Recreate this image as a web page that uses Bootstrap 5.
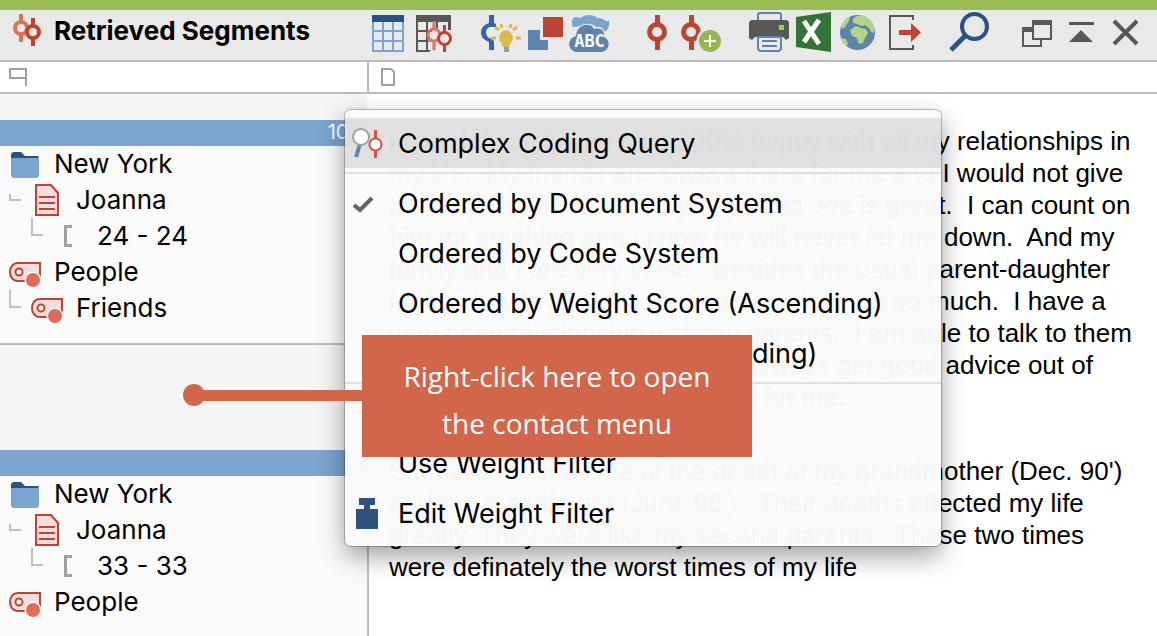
<!DOCTYPE html>
<html lang="en">
<head>
<meta charset="utf-8">
<meta name="viewport" content="width=device-width, initial-scale=1">
<title>Retrieved Segments</title>
<link href="https://cdn.jsdelivr.net/npm/bootstrap@5.3.0/dist/css/bootstrap.min.css" rel="stylesheet">
<style>
  :root { --line: #bcbcbc; --side: 369px; }
  body { font-family: Inter, "Noto Sans", sans-serif; font-size: 26px; line-height: 36px; color: #000; background: #fff; }
  .stripe { height: 10px; background: #99bd52; }
  .toolbar { height: 52px; background: #e9e9e9; border-bottom: 2px solid var(--line); }
  .toolbar h1 { font-size: 26px; line-height: 34px; font-weight: 700; }
  .toolbar svg, .tree svg, .menu svg { display: block; flex: none; }
  .tool { padding: 0; border: 0; background: none; }
  .colheads { height: 32px; border-bottom: 2px solid var(--line); }
  .side { width: var(--side); flex: none; }
  .colheads .side, .segment + .segment { border-right: 2px solid var(--line); }
  .results { min-height: calc(100vh - 94px); }
  .segment { background: #fafafa; }
  .segment:first-child { height: 251px; margin-right: 2px; border-bottom: 2px solid var(--line); }
  .gutter { height: 26px; background: #f5f5f5; }
  .segment + .segment .gutter { height: 105px; }
  .weight { height: 26px; line-height: 24px; font-size: 20px; background: #7ba4cf; color: #fff; padding-right: 6px; }
  .tree li { height: 36px; }
  .quotes { font: 26px/32px "Liberation Sans", Arial, sans-serif; padding: 31px 0 0 20px; }
  .quotes p { white-space: pre; margin-bottom: 42px; }
  .menu { position: absolute; left: 345px; top: 110px; width: 596px; padding: 8px 0; font-size: 27px; background: rgba(250,250,250,.98); border-radius: 6px; box-shadow: 0 0 1px 1px rgba(0,0,0,.25), 0 10px 26px rgba(0,0,0,.38); z-index: 2; }
  .menu .dropdown-item { height: 50px; padding: 2px 0 0 7px; color: #000; }
  .menu .dropdown-item.current { background: rgba(0,0,0,.1); }
  .menu .glyph { width: 46px; flex: none; }
  .menu hr { margin: 4px 0; border-top: 2px solid #e0e0e0; opacity: 1; }
  .callout-box { position: absolute; left: 362px; top: 335px; width: 390px; padding: 18px 0 10px; background: #d2664a; color: #fff; font: 28px/47px "Open Sans", sans-serif; z-index: 3; }
  .callout-box::before { content: ""; position: absolute; right: 100%; top: 55px; width: 168px; height: 11px; background: inherit; }
  .callout-box::after { content: ""; position: absolute; right: 100%; top: 49px; width: 22px; height: 22px; margin-right: 157px; border-radius: 50%; background: inherit; }
</style>
</head>
<body>
<svg width="0" height="0" class="position-absolute" aria-hidden="true">
  <symbol id="folder" viewBox="0 0 28 26"><path d="M0 6V2l2-2h8l4 4h13l1 2z" fill="#2b5381"/><path d="M0 6h28v18l-2 2H2l-2-2z" fill="#7ba4cf"/></symbol>
  <symbol id="doc" viewBox="0 0 24 32"><path d="M1 1h15l7 8v22H1z" fill="#f3dedd" stroke="#bd4332" stroke-width="2"/><path d="M4 13h16M4 19h16M4 25h16" stroke="#bd4332" stroke-width="2"/></symbol>
  <symbol id="code" viewBox="0 0 33 26"><path d="M31 1H9C4 1 1 5 1 10s3 9 8 9h22z" fill="#f3dedd" stroke="#bd4332" stroke-width="2"/><circle cx="10" cy="10" r="3.5" fill="#fff" stroke="#bd4332" stroke-width="2"/><circle cx="24" cy="18" r="8.5" fill="#fafafa"/><circle cx="24" cy="18" r="7" fill="#dd6d58"/></symbol>
  <symbol id="elbow" viewBox="0 0 12 18"><path d="M1 0v17h11" fill="none" stroke="#c3bfbb" stroke-width="2"/></symbol>
  <symbol id="elbow-short" viewBox="0 0 12 7"><path d="M1 0v6h11" fill="none" stroke="#c3bfbb" stroke-width="2"/></symbol>
  <symbol id="bracket" viewBox="0 0 8 22"><path d="M8 1.500H1.500V20.500H8" fill="none" stroke="#a0a0a0" stroke-width="3"/></symbol>
</svg>

<div class="stripe"></div>
<header class="toolbar d-flex align-items-start">
  <div class="d-flex align-items-start flex-grow-1">
    <svg class="ms-2" width="46" height="50" viewBox="8 10 46 50" aria-hidden="true"><g fill="none" stroke-width="4"><path d="M21 14v8M21 34v8" stroke="#e0705b"/><circle cx="21" cy="28" r="6" stroke="#e0705b"/><circle cx="33" cy="32" r="6" fill="#e9e9e9" stroke="#bd4332"/><path d="M33 18v8M33 38v8" stroke="#bd4332"/></g></svg>
    <h1 class="mb-0 mt-1 text-nowrap">Retrieved Segments</h1>
  </div>
  <div class="d-flex">
    <button class="tool" aria-label="Table"><svg width="42" height="50" viewBox="370 10 42 50"><path d="M372 21h32v31h-32z" fill="#7ba4cf"/><path d="M374 22h8v8h-8zm10 0h8v8h-8zm10 0h8v8h-8zM374 32h8v8h-8zm10 0h8v8h-8zm10 0h8v8h-8zM374 42h8v8h-8zm10 0h8v8h-8zm10 0h8v8h-8z" fill="#e9e9e9"/><path d="M372 15h32v7h-32z" fill="#2b5381"/></svg></button><button class="tool" aria-label="Coded table"><svg width="60" height="50" viewBox="412 10 60 50"><path d="M416 15h35v15h-3v-8h-30v8h8v-8h2v8h4v2h-4v8l2 2h-2v8l3 0-2 2h-13z" fill="#585856"/><path d="M418 22h8v8h-8zM418 32h8v8h-8zM418 42h8v8h-8z" fill="#e9e9e9"/><path d="M436 22h2v6h-2z" fill="#585856"/><g fill="none" stroke-width="3"><circle cx="434" cy="35" r="6" stroke="#e0705b"/><path d="M434 21v8M434 41v9" stroke="#e0705b"/><circle cx="444.500" cy="38.500" r="6" fill="#e9e9e9" stroke="#bd4332"/><path d="M444.500 25v7M444.500 45v7" stroke="#bd4332"/></g></svg></button><button class="tool" aria-label="Code ideas"><svg width="54" height="50" viewBox="472 10 54 50"><path d="M489 15h5v8l2 1v3h-4c-4 0-6 2-6 5.500s3 6 6 6.500l2 2v9h-5v-8c-5-2-8-5-8-9.500s3-8 8-9.500z" fill="#37649f"/><path d="M491 38h5M516 38h5M499 30l-4-3M513 30l4-3M502 28l-1-4M510 28l1-4" stroke="#dfb84c" stroke-width="3"/><path d="M506 30a8 8 0 0 1 5 13l-2 4h-6l-2-4a8 8 0 0 1 5-13z" fill="#dfb84c"/><path d="M504 47h5v5h-5z" fill="#999"/></svg></button><button class="tool" aria-label="Overlay"><svg width="40" height="50" viewBox="526 10 40 50"><path d="M528 30h12v10h8v10h-20z" fill="#5d84ad"/><path d="M543 17h20v20h-20z" fill="#bd4332"/></svg></button><button class="tool" aria-label="Word cloud"><svg width="66" height="50" viewBox="566 10 66 50"><path d="M573 27c-2-5-1-9 2-10l6 1c3-4 13-4 16 0 6 0 8 2 8 3h4c1 4-1 9-4 11-2-4-5-6-9-5-4-4-12-4-16-1z" fill="#7ba4cf"/><path d="M576 52c-9-2-9-14 0-16 1-13 15-14 18-7 8-2 11 3 10 8 7 3 6 13-2 15z" fill="#5d84ad"/><text x="589.500" y="47" text-anchor="middle" font-family="DejaVu Sans Mono, monospace" font-weight="700" font-size="17" fill="#fff">ABC</text></svg></button><button class="tool" aria-label="Code"><svg width="42" height="50" viewBox="632 10 42 50"><path d="M657.500 15v10M657.500 39v11" stroke="#bd4332" stroke-width="5"/><circle cx="657" cy="32" r="7.500" fill="none" stroke="#bd4332" stroke-width="5"/></svg></button><button class="tool" aria-label="Add code"><svg width="66" height="50" viewBox="674 10 66 50"><path d="M691.500 15v10M691.500 39v11" stroke="#bd4332" stroke-width="5"/><circle cx="691" cy="32" r="7.500" fill="none" stroke="#bd4332" stroke-width="5"/><circle cx="710" cy="41" r="13.500" fill="#e9e9e9"/><circle cx="710" cy="41" r="11" fill="#97b551"/><path d="M704 41h12M710 35v12" stroke="#fff" stroke-width="2"/></svg></button><button class="tool" aria-label="Print"><svg width="52" height="50" viewBox="740 10 52 50"><rect x="758" y="13" width="23" height="12" rx="2" fill="none" stroke="#5d84ad" stroke-width="2"/><path d="M751 20h36l2 2v16l-3 2-3-3h-28l-3 3-3-2V22z" fill="#585856"/><path d="M779 25h5v5h-5z" fill="#a0cb5d"/><path d="M758 37h23v12l-2 2h-19l-2-2z" fill="#e9e9e9" stroke="#5d84ad" stroke-width="2"/><path d="M762 41h15M762 46h15" stroke="#5d84ad" stroke-width="2"/></svg></button><button class="tool" aria-label="Export to Excel"><svg width="44" height="50" viewBox="792 10 44 50"><path d="M796 17l35-5v40l-35-5z" fill="#327338"/><path d="M804 21l15 23M819 20l-15 22" stroke="#fff" stroke-width="5"/></svg></button><button class="tool" aria-label="Export as web page"><svg width="48" height="50" viewBox="836 10 48 50"><circle cx="857.500" cy="32.500" r="17.500" fill="#5d84ad"/><path d="M841 27c1-4 4-8 9-10l-1 4-4 6-2 2zM853 19c5-5 12-4 16 0 5 4 6 9 5 14l-3-1-2-4-4-3-4 1-4-2-4-1zM850 30l6-4 5 2 5 1 2 4-3 5-2 5-4 1-2-6-5-2zM841 38l5 1 2 5-2 2c-3-2-5-5-5-8z" fill="#b4d387"/></svg></button><button class="tool" aria-label="Export"><svg width="56" height="50" viewBox="884 10 56 50"><path d="M913 20v-4h-23v33h23v-4" fill="none" stroke="#585856" stroke-width="2"/><path d="M899 30h12v-7l10 9.500-10 9.500v-7h-12z" fill="#bd4332"/></svg></button><button class="tool" aria-label="Search"><svg width="72" height="50" viewBox="940 10 72 50"><circle cx="974.500" cy="26.500" r="12.500" fill="none" stroke="#2b5381" stroke-width="4"/><path d="M965 36l-14 14" stroke="#2b5381" stroke-width="5"/></svg></button><button class="tool" aria-label="Undock"><svg width="50" height="50" viewBox="1012 10 50 50"><path d="M1023 29h18v17h-18z" fill="none" stroke="#585856" stroke-width="2"/><path d="M1022 27h10v5h-10z" fill="#585856"/><path d="M1033 21h18v18h-18z" fill="#e9e9e9" stroke="#585856" stroke-width="2"/><path d="M1032 20h20v5h-20z" fill="#585856"/></svg></button><button class="tool" aria-label="Minimize"><svg width="42" height="50" viewBox="1062 10 42 50"><path d="M1069 22h25v3h-25zM1081 30l12 12h-24z" fill="#585856"/></svg></button><button class="tool" aria-label="Close"><svg width="53" height="50" viewBox="1104 10 53 50"><path d="M1114 21l23 23M1137 21l-23 23" stroke="#585856" stroke-width="4"/></svg></button>
  </div>
</header>

<div class="colheads d-flex">
  <div class="side"><svg class="d-block" width="40" height="30" viewBox="0 62 40 30" aria-hidden="true"><path d="M26 86V69H10v9h16" fill="none" stroke="#a0a0a0" stroke-width="2"/></svg></div>
  <div><svg class="d-block" width="40" height="30" viewBox="369 62 40 30" aria-hidden="true"><path d="M382 69h9l3 3v13h-12z" fill="none" stroke="#a0a0a0" stroke-width="2"/></svg></div>
</div>

<main class="results d-flex">
  <div class="side d-flex flex-column">
    <section class="segment">
      <div class="gutter"></div>
      <div class="weight text-end">100</div>
      <ul class="tree list-unstyled mb-0">
        <li class="d-flex align-items-center"><svg width="54" height="36" viewBox="0 0 54 36"><use href="#folder" x="11" y="6" width="28" height="26"/></svg>New York</li>
        <li class="d-flex align-items-center"><svg width="76" height="36" viewBox="0 0 76 36"><use href="#elbow-short" x="9" y="12" width="12" height="7"/><use href="#doc" x="35" y="2" width="24" height="32"/></svg>Joanna</li>
        <li class="d-flex align-items-center"><svg width="97" height="36" viewBox="0 0 97 36"><use href="#elbow" x="31" y="0" width="12" height="18"/><use href="#bracket" x="64" y="7" width="8" height="22"/></svg>24 - 24</li>
        <li class="d-flex align-items-center"><svg width="54" height="36" viewBox="0 0 54 36"><use href="#code" x="9" y="8" width="33" height="26"/></svg>People</li>
        <li class="d-flex align-items-center"><svg width="76" height="36" viewBox="0 0 76 36"><use href="#elbow" x="9" y="0" width="12" height="18"/><use href="#code" x="31" y="8" width="33" height="26"/></svg>Friends</li>
      </ul>
    </section>
    <section class="segment flex-grow-1">
      <div class="gutter"></div>
      <div class="weight text-end">0</div>
      <ul class="tree list-unstyled mb-0">
        <li class="d-flex align-items-center"><svg width="54" height="36" viewBox="0 0 54 36"><use href="#folder" x="11" y="6" width="28" height="26"/></svg>New York</li>
        <li class="d-flex align-items-center"><svg width="76" height="36" viewBox="0 0 76 36"><use href="#elbow-short" x="9" y="12" width="12" height="7"/><use href="#doc" x="35" y="2" width="24" height="32"/></svg>Joanna</li>
        <li class="d-flex align-items-center"><svg width="97" height="36" viewBox="0 0 97 36"><use href="#elbow" x="31" y="0" width="12" height="18"/><use href="#bracket" x="64" y="7" width="8" height="22"/></svg>33 - 33</li>
        <li class="d-flex align-items-center"><svg width="54" height="36" viewBox="0 0 54 36"><use href="#code" x="9" y="8" width="33" height="26"/></svg>People</li>
      </ul>
    </section>
  </div>
  <article class="quotes flex-grow-1">
    <p>I can definately say I am 100% happy with all my relationships in
my life.  My friends are always there for me and I would not give
them up for the world.  My boyfriend Joe is great.  I can count on
him for anything and I know he will never let me down.  And my
family and I are very close.  Besides the usual parent-daughter
fights, they live for me and appreciate them so much.  I have a
very open relationship with my parents.  I am able to talk to them
about anything at all, and I can always get good advice out of
them.  They really want the best for me.</p>
    <p class="mb-0">Sadness reminds me of the death of my grandmother (Dec. 90')
and my grandfather (June 96').  Their deaths effected my life
greatly. They were like my second parents.  These two times
were definately the worst times of my life</p>
  </article>
</main>

<div class="menu" role="menu">
  <button class="dropdown-item current d-flex align-items-center" role="menuitem"><span class="glyph"><svg width="32" height="32" viewBox="352 127 32 32"><path d="M360 143l-4 13" stroke="#5d84ad" stroke-width="4"/><circle cx="361" cy="136" r="8" fill="#fff" stroke="#a0a0a0" stroke-width="2"/><path d="M375.500 129v28" stroke="#d15744" stroke-width="3"/><circle cx="375.500" cy="143.500" r="6" fill="#fff" stroke="#d15744" stroke-width="2"/></svg></span>Complex Coding Query</button>
  <hr>
  <button class="dropdown-item d-flex align-items-center" role="menuitem"><span class="glyph"><svg width="32" height="32" viewBox="352 189 32 32"><path d="M354 206l6 5 12-12" fill="none" stroke="#636363" stroke-width="4"/></svg></span>Ordered by Document System</button>
  <button class="dropdown-item d-flex align-items-center" role="menuitem"><span class="glyph"></span>Ordered by Code System</button>
  <button class="dropdown-item d-flex align-items-center" role="menuitem"><span class="glyph"></span>Ordered by Weight Score (Ascending)</button>
  <button class="dropdown-item d-flex align-items-center" role="menuitem"><span class="glyph"></span>Ordered by Weight (Descending)</button>
  <hr>
  <button class="dropdown-item d-flex align-items-center" role="menuitem"><span class="glyph"></span>Weight Filter</button>
  <button class="dropdown-item d-flex align-items-center" role="menuitem"><span class="glyph"></span>Use Weight Filter</button>
  <button class="dropdown-item d-flex align-items-center" role="menuitem"><span class="glyph"><svg width="32" height="32" viewBox="352 497 32 32"><path d="M359 496h16v8h-5v4h8v20h-22v-20h8v-4h-5z" fill="#2f527d"/></svg></span>Edit Weight Filter</button>
</div>

<div class="callout-box text-center">Right-click here to open<br>the contact menu</div>
<script src="https://cdn.jsdelivr.net/npm/bootstrap@5.3.0/dist/js/bootstrap.bundle.min.js"></script>
</body>
</html>
